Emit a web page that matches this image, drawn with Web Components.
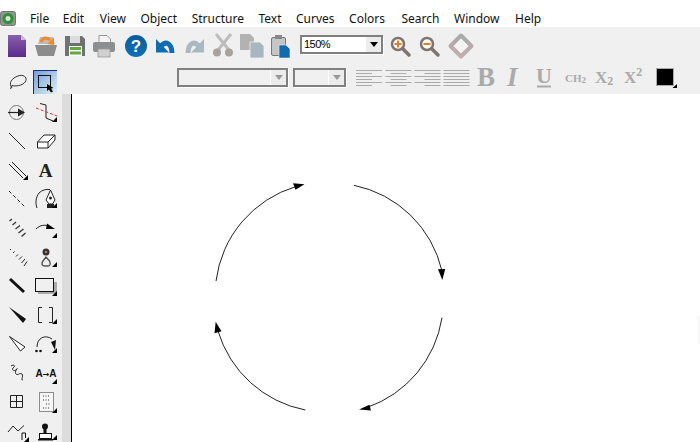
<!DOCTYPE html>
<html><head><meta charset="utf-8"><title>Editor</title>
<style>html,body{margin:0;padding:0;height:100%;overflow:hidden;background:#fff}</style>
</head><body>
<app-shell></app-shell>
<script>
const corner=(x,y)=>`<path d="M${x},${y+5}L${x+5},${y}V${y+5}Z" fill="#000"/>`;
const G='#aaa';
const serif='font-family="Liberation Serif" font-weight="700"';
const lines=(spec)=>spec.map((s,i)=>`<path d="M${s[0]},${70.5+i*3}H${s[1]}" stroke="#aaa"/>`).join('');
const ICONS={
 appicon:`<rect x="7.5" y="11.5" width="15" height="14" rx="2" fill="#8b9a8b" stroke="#777"/><circle cx="15" cy="18.5" r="5.5" fill="#2f8f3f"/><circle cx="15" cy="18.5" r="2.5" fill="#d8e8d0"/>`,
 new:`<defs><linearGradient id="g" x1="0" y1="0" x2="0" y2="1"><stop offset="0" stop-color="#8660ad"/><stop offset="1" stop-color="#5a2a88"/></linearGradient></defs><path d="M8,35H21L26,40V57H8Z" fill="url(#g)"/><path d="M21,35L26,40H21Z" fill="#cbbcdc"/>`,
 open:`<path d="M38,44L40,37H53L55,44Z" fill="#c0bdb8"/><path d="M35,45H57L54,56H38Z" fill="#8c8c8c"/><path d="M41,42C43,37 47,37 50,40" fill="none" stroke="#ee8a2c" stroke-width="3"/><path d="M47,44L54,37.5L54,45Z" fill="#ee8a2c"/>`,
 save:`<path d="M65,36H82L85,39V56H65Z" fill="#6e7272"/><rect x="70" y="36" width="10" height="7" fill="#dcdcdc"/><rect x="69" y="46" width="13" height="10" fill="#fff"/><rect x="70" y="47" width="11" height="3" fill="#63a83f"/><rect x="70" y="51.500" width="11" height="3" fill="#63a83f"/>`,
 print:`<path d="M99,35.500H107L110.500,39V43H99Z" fill="#f4f4f4" stroke="#999"/><rect x="93" y="42" width="22" height="10" rx="2" fill="#8c8f90"/><rect x="98" y="49" width="12" height="8" fill="#d0d0d0" stroke="#999" stroke-width=".8"/>`,
 help:`<defs><linearGradient id="g" x1="0" y1="0" x2="0" y2="1"><stop offset="0" stop-color="#0d5c9a"/><stop offset="1" stop-color="#0f70b8"/></linearGradient></defs><circle cx="136" cy="46" r="11" fill="url(#g)"/><text x="136" y="52" text-anchor="middle" font-family="Liberation Sans" font-weight="700" font-size="17" fill="#fff">?</text>`,
 undo:`<path d="M156,39V52.500H169Z" fill="#0f6cb0"/><path d="M160,47C166,40 171.500,43 172,53" fill="none" stroke="#0f6cb0" stroke-width="5"/>`,
 redo:`<g transform="matrix(-1 0 0 1 360 0)"><path d="M156,39V52.500H169Z" fill="#a9b9c1"/><path d="M160,47C166,40 171.500,43 172,53" fill="none" stroke="#a9b9c1" stroke-width="5"/></g>`,
 cut:`<path d="M216,34L229,50M231,34L218,50" stroke="#bdbdbd" stroke-width="3" fill="none"/><circle cx="217" cy="52.500" r="4" fill="#a8a29d"/><circle cx="229" cy="52.500" r="4" fill="#a8a29d"/>`,
 copy:`<path d="M240,34H250L254,38V50H240Z" fill="#b2b2b2"/><path d="M250,42H260L264,46V58H250Z" fill="#a8b6bf" stroke="#f0f0f0" stroke-width=".8"/>`,
 paste:`<rect x="271.500" y="37.500" width="14" height="18" rx="1.500" fill="#c5c5c5" stroke="#777"/><rect x="275" y="35" width="7" height="4" fill="#888"/><path d="M279,45H286L290,49V58H279Z" fill="#0f6cb0" stroke="#f0f0f0" stroke-width=".6"/>`,
 zoomin:`<path d="M403,49L409,55" stroke="#7c7570" stroke-width="3.500" stroke-linecap="round"/><circle cx="398" cy="44" r="6" fill="#fff" stroke="#7c7570" stroke-width="2.500"/><path d="M394.500,44H401.500M398,40.500V47.500" stroke="#ee7b22" stroke-width="2"/>`,
 zoomout:`<path d="M432,49L438,55" stroke="#7c7570" stroke-width="3.500" stroke-linecap="round"/><circle cx="427" cy="44" r="6" fill="#fff" stroke="#7c7570" stroke-width="2.500"/><path d="M423.500,44H430.500" stroke="#ee7b22" stroke-width="2"/>`,
 diamond:`<defs><linearGradient id="g" x1="0" y1="0" x2="0" y2="1"><stop offset="0" stop-color="#a9a9a9"/><stop offset="1" stop-color="#c4aeb0"/></linearGradient></defs><path d="M461,35.500L471.500,46L461,56.500L450.500,46Z" fill="#f4f4f4" stroke="url(#g)" stroke-width="4" stroke-linejoin="round"/>`,
 left:lines([[356,382],[356,372],[356,382],[356,372],[356,382],[356,372]]),
 center:lines([[385,411],[390,406],[385,411],[390,406],[385,411],[390,406]]),
 right:lines([[414,440],[424,440],[414,440],[424,440],[414,440],[424,440]]),
 justify:lines([[443,469],[443,469],[443,469],[443,469],[443,469],[443,469]]),
 bold:`<text x="477" y="86" ${serif} font-size="27" fill="${G}">B</text>`,
 italic:`<text x="507" y="86" ${serif} font-style="italic" font-size="27" fill="${G}">I</text>`,
 under:`<text x="536" y="83" ${serif} font-size="22" fill="${G}">U</text><path d="M537,86.500H551" stroke="${G}" stroke-width="2"/>`,
 ch2:`<text x="565" y="82" ${serif} font-size="11" fill="${G}">CH<tspan font-size="9" dy="1">2</tspan></text>`,
 sub:`<text x="595" y="83" ${serif} font-size="17" fill="${G}">X<tspan font-size="12" dy="2">2</tspan></text>`,
 sup:`<text x="624" y="83" ${serif} font-size="17" fill="${G}">X<tspan font-size="12" dy="-7">2</tspan></text>`,
 swatch:`<rect x="656.500" y="68.500" width="17" height="17" fill="#000" stroke="#aaa"/><path d="M672.500,88L677,84V88Z" fill="#000"/>`,
 lasso:`<path d="M12,88C8,83 12,78 18,76C23,74 27,77 26,80.500C25,84.500 17,87 12,85.500M12,85.500L10.500,89" fill="none" stroke="#333"/>`,
 select:`<defs><linearGradient id="g" x1="0" y1="0" x2="1" y2="1"><stop offset="0" stop-color="#6f9bdc"/><stop offset="1" stop-color="#dff3f1"/></linearGradient></defs><rect x="33" y="70" width="24" height="24" fill="url(#g)"/><path d="M33.500,94V70.500H57" fill="none" stroke="#16307f"/><rect x="38.500" y="75.500" width="12" height="12" fill="none" stroke="#111"/><path d="M47,84L47,91L49,89.500L51,92.500L53,91.500L51,88.500L53.500,88Z" fill="#000"/>`,
 target:`<circle cx="16.500" cy="112.500" r="7" fill="none" stroke="#777"/><path d="M8,112.500H22" stroke="#222" stroke-width="1.200"/><path d="M18,108.500L25,112.500L18,116.500Z" fill="#222"/>`,
 bond:`<path d="M40,103.500L46,105V118L53,121" fill="none" stroke="#222"/><path d="M36,108L57,116" stroke="#f03030" stroke-dasharray="3 2"/>${corner(52,117)}`,
 line:`<path d="M9,133L25,149" stroke="#222"/>`,
 eraser:`<path d="M37.500,142L44,135H55L55,140L48,148H37.500ZM37.500,142H48V148M48,142L55,135" fill="#fff" stroke="#222"/>`,
 dline:`<path d="M9,164L23,178M12,162L26,176" stroke="#222"/>${corner(23,175)}`,
 atext:`<text x="45.500" y="177" text-anchor="middle" ${serif} font-size="19" fill="#222">A</text>`,
 dash:`<path d="M9,191L25,207" stroke="#222" stroke-dasharray="3.500 2.500"/>`,
 pen:`<path d="M37,208C35,203 36,197 39,193C42,190 46,189 50,189.500" fill="none" stroke="#222"/><path d="M50.500,190L55,200L52.500,204H49L46,200Z" fill="#fff" stroke="#222"/><circle cx="50.500" cy="198" r="1.500" fill="#222"/><rect x="47" y="204" width="7" height="4" fill="#222"/>${corner(52,203)}`,
 hash:`<path d="M9.500,221L12,219M12.500,225L16,222M15.500,229L20,225.500M18.500,233L23.500,229M21.500,236.500L25.500,233" stroke="#333" stroke-width="1.300"/>`,
 arrowarc:`<path d="M36,229C40,225 45,224 51,227" fill="none" stroke="#222"/><path d="M47,223.500L55,229L46,229Z" fill="#000"/>${corner(52,233)}`,
 hash2:`<path d="M10,250L11,249M13,253L14.500,251.500M16,256.500L18,254.500M19,259.500L22,256.500M21.500,263L25,259M24,266L27,261.500" stroke="#222"/>`,
 key:`<path d="M46,257L43,261C41,264 42,266 45,266H48C50,266 51,264 49.500,261Z" fill="none" stroke="#555" stroke-width="1.400"/><circle cx="46" cy="252" r="3.500" fill="#333"/><circle cx="46" cy="252" r="1.200" fill="#f06060"/>${corner(52,262)}`,
 bold2:`<path d="M10,279L24,292" stroke="#111" stroke-width="3"/>`,
 rect:`<rect x="38" y="282" width="19" height="12" fill="#aaa"/><rect x="35.500" y="278.500" width="18" height="13" fill="#f0f0f0" stroke="#111"/>${corner(52,291)}`,
 wedge:`<path d="M9,307L26,319L23,323Z" fill="#111"/>`,
 brackets:`<path d="M42,307.500H38.500V322.500H42M49,307.500H52.500V322.500H49" fill="none" stroke="#222"/>${corner(52,319)}`,
 hwedge:`<path d="M9.500,336.500L25,347L20.500,351Z" fill="#fff" stroke="#222"/>`,
 arcdots:`<path d="M37,347C37,338 45,334 52,339" fill="none" stroke="#222"/><path d="M51,342L56,340L55,350Z" fill="#111"/><circle cx="36.500" cy="351" r="1.300" fill="#111"/><circle cx="40.500" cy="351" r="1.300" fill="#111"/>${corner(52,348)}`,
 wave:`<path d="M11,366C14,364 16,366 13,368C11,370 15,372 17,369C18,367 14,372 16,374C18,376 20,372 22,374C24,377 20,380 23,380" fill="none" stroke="#222" stroke-width="1"/>`,
 a2a:`<text x="46" y="377" text-anchor="middle" font-family="Liberation Sans" font-weight="700" font-size="10" fill="#111">A<tspan font-family="DejaVu Sans" font-size="8">→</tspan>A</text>${corner(52,379)}`,
 grid:`<path d="M10.500,395.500H22.500V407.500H10.500ZM16.500,395.500V407.500M10.500,401.500H22.500" fill="none" stroke="#222"/>`,
 dotdoc:`<rect x="39.500" y="392.500" width="14" height="19" fill="#f6f6f6" stroke="#222" stroke-dasharray="1 1"/><path d="M43,396H50M43,400H50M46,404H50M43,408H50" stroke="#333" stroke-dasharray="1 1.500"/>${corner(52,408)}`,
 zig:`<path d="M8,432L13,426L18,431L24,425.500" fill="none" stroke="#222"/><path d="M22,440V433H25.500V438" fill="none" stroke="#111"/>${corner(24,437)}`,
 stamp:`<circle cx="45" cy="426.500" r="3" fill="#111"/><path d="M45,429V433" stroke="#111" stroke-width="3"/><rect x="39.500" y="433.500" width="12" height="5" fill="#fff" stroke="#111"/><rect x="38" y="439" width="15" height="1.500" fill="#111"/>${corner(52,435)}`
};
const shadow=(el,html)=>el.attachShadow({mode:'open'}).innerHTML=html;

class IconBox extends HTMLElement{
 connectedCallback(){
  const a=+this.getAttribute('x1'),b=+this.getAttribute('x2'),t=+this.getAttribute('y1'),u=+this.getAttribute('y2');
  shadow(this,`<style>:host{display:block;flex:none;width:${b-a}px;height:${u-t}px}svg{display:block;overflow:visible}</style>
  <svg width="${b-a}" height="${u-t}" viewBox="${a} ${t} ${b-a} ${u-t}">${ICONS[this.getAttribute('name')]}</svg>`);
 }
}
customElements.define('icon-box',IconBox);

class MenuBar extends HTMLElement{
 connectedCallback(){
  const items='File Edit View Object Structure Text Curves Colors Search Window Help'.split(' ');
  const nudge={Edit:-1,View:1,Search:2,Help:1};
  shadow(this,`<style>:host{display:flex;height:27px;background:#fff;box-sizing:border-box;font:12px/16px "Noto Sans",sans-serif;color:#111}
  .items{display:flex;gap:14.5px;padding:11px 0 0 7px}</style>
  <icon-box name="appicon" x1="7" x2="30" y1="0" y2="27"></icon-box>
  <div class="items">${items.map(i=>`<span style="margin-left:${nudge[i]||0}px">${i}</span>`).join('')}</div>`);
 }
}
customElements.define('menu-bar',MenuBar);

class ComboBox extends HTMLElement{
 connectedCallback(){
  const dis=this.hasAttribute('disabled');
  const w=this.getAttribute('width');
  shadow(this,`<style>:host{display:block;flex:none;width:${w}px;height:18.500px;box-sizing:border-box;border:2px solid #808080;box-shadow:1px 1px 0 #fff;background:${dis?'#f0f0f0':'#fff'};position:relative;font:11px/14px "Liberation Sans",sans-serif;letter-spacing:-.5px;color:#000}
  .t{padding-left:2px;display:block}
  .b{position:absolute;right:0;top:0;bottom:0;width:16px;background:#ececec;border-left:1px solid #fff;box-sizing:border-box;display:flex;align-items:center;justify-content:center}
  i{display:block;width:0;height:0;border:4.500px solid transparent;border-bottom:0;border-top:5px solid ${dis?'#999':'#000'}}</style>
  <span class="t"><slot></slot></span><span class="b"><i></i></span>`);
 }
}
customElements.define('combo-box',ComboBox);

class MainToolbar extends HTMLElement{
 connectedCallback(){
  const b=[['new',4,31],['open',31,60],['save',60,89],['print',89,120],['help',120,151],['undo',151,180],['redo',180,208],['cut',208,237],['copy',237,267],['paste',267,296]];
  const c=[['zoomin',387,415],['zoomout',415,444],['diamond',444,478]];
  const r=x=>x.map(i=>`<icon-box name="${i[0]}" x1="${i[1]}" x2="${i[2]}" y1="27" y2="67"></icon-box>`).join('');
  shadow(this,`<style>:host{display:flex;height:40px;background:#f0f0f0;padding-left:4px;box-sizing:border-box}
  combo-box{margin:8px 4px 0 4px}</style>${r(b)}<combo-box width="83">150%</combo-box>${r(c)}`);
 }
}
customElements.define('main-toolbar',MainToolbar);

class FormatBar extends HTMLElement{
 connectedCallback(){
  const b=[['left',350,383.500],['center',383.500,412.500],['right',412.500,441.500],['justify',441.500,472],['bold',472,503],['italic',503,532],['under',532,561],['ch2',561,591],['sub',591,620],['sup',620,650],['swatch',650,680]];
  shadow(this,`<style>:host{display:flex;height:27px;background:#f0f0f0;padding:0 0 0 115px;box-sizing:border-box}
  combo-box{margin:1px 5px 0 0}</style>
  <combo-box width="111" disabled></combo-box><combo-box width="53" disabled style="margin-right:4px"></combo-box>
  ${b.map(i=>`<icon-box name="${i[0]}" x1="${i[1]}" x2="${i[2]}" y1="67" y2="94"></icon-box>`).join('')}`);
 }
}
customElements.define('format-bar',FormatBar);

class ToolPanel extends HTMLElement{
 connectedCallback(){
  const t=['lasso','select','target','bond','line','eraser','dline','atext','dash','pen','hash','arrowarc','hash2','key','bold2','rect','wedge','brackets','hwedge','arcdots','wave','a2a','grid','dotdoc','zig','stamp'];
  shadow(this,`<style>:host{display:grid;grid-template-columns:28px 28px;grid-auto-rows:29px;width:62px;flex:none;box-sizing:border-box;padding-left:3px;background:#f0f0f0;overflow:hidden}</style>
  ${t.map((n,i)=>{const x=3+(i%2)*28,y=67+Math.floor(i/2)*29;return `<icon-box name="${n}" x1="${x}" x2="${x+28}" y1="${y}" y2="${y+29}"></icon-box>`}).join('')}`);
 }
}
customElements.define('tool-panel',ToolPanel);

class DrawCanvas extends HTMLElement{
 connectedCallback(){
  shadow(this,`<style>:host{display:block;flex:1;min-height:0;background:#fff;border-left:1px solid #000;overflow:hidden}svg{display:block}</style>
  <svg width="628" height="348" viewBox="72 94 628 348">
   <g fill="none" stroke="#222" stroke-width="1">
    <path d="M216,281A113.500,113.500 0 0 1 296,186.500"/>
    <path d="M354,185.300A113.500,113.500 0 0 1 442,271"/>
    <path d="M442,317.700A113.500,113.500 0 0 1 367,407.500"/>
    <path d="M305.300,410A113.500,113.500 0 0 1 218,331"/>
   </g>
   <path d="M304.500,184.300L293,183.300L295.500,189.800Z"/>
   <path d="M442.300,280L438,269.300L445.200,269Z"/>
   <path d="M359,409.500L369.500,404.800L370.900,410.500Z"/>
   <path d="M215.700,321.800L214.500,333.300L221.500,331.300Z"/>
   <rect x="697" y="316" width="3" height="28" fill="#f9f9f9"/>
  </svg>`);
 }
}
customElements.define('draw-canvas',DrawCanvas);

class AppShell extends HTMLElement{
 connectedCallback(){
  shadow(this,`<style>:host{display:flex;flex-direction:column;width:700px;height:442px;overflow:hidden;background:#f0f0f0}
  .main{display:flex;flex:1;min-height:0}
  .right{display:flex;flex-direction:column;flex:1;min-width:0}
  .work{display:flex;flex:1;min-height:0}
  .strip{width:9px;flex:none;background:#dcdcdc}</style>
  <menu-bar></menu-bar><main-toolbar></main-toolbar>
  <div class="main"><tool-panel></tool-panel>
   <div class="right"><format-bar></format-bar>
    <div class="work"><div class="strip"></div><draw-canvas></draw-canvas></div></div></div>`);
 }
}
customElements.define('app-shell',AppShell);
</script>
</body></html>
